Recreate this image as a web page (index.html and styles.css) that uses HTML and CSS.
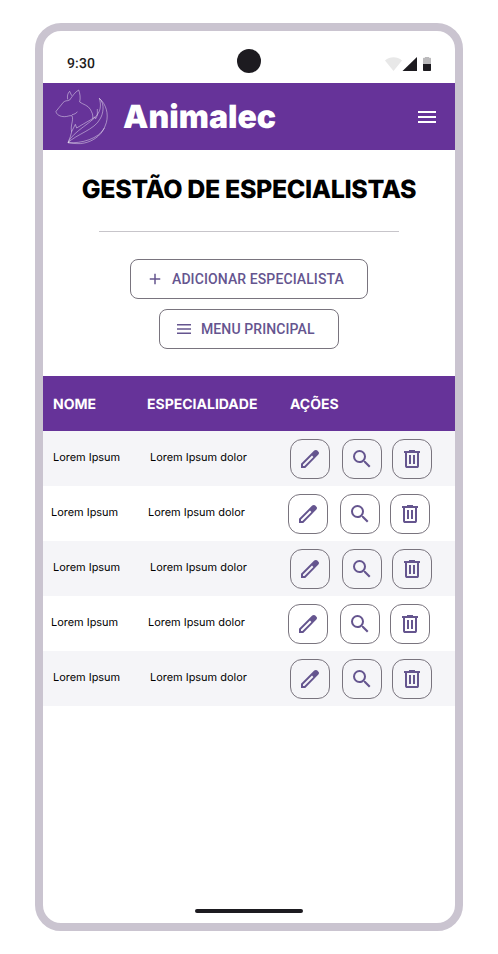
FILE: index.html
```html
<!DOCTYPE html>
<html lang="pt">
<head>
<meta charset="utf-8">
<title>Animalec</title>
<link rel="stylesheet" href="styles.css">
</head>
<body>
<svg class="defs" width="0" height="0">
  <symbol id="edit" viewBox="0 0 24 24"><path fill-rule="evenodd" d="M3 21v-4.250L16.200 3.550Q17.100 2.900 18 3q.7 0 1.300.6l1.100 1.100q.6.600.6 1.300 0 .8-.6 1.500L7.250 21zM5 19h1.400L15.400 10 14 8.600 5 17.600z"/></symbol>
  <symbol id="search" viewBox="0 0 24 24"><path d="M15.500 14h-.79l-.28-.27A6.470 6.470 0 0 0 16 9.500 6.500 6.500 0 1 0 9.500 16c1.610 0 3.090-.59 4.230-1.570l.27.28v.79l5 4.990L20.490 19l-4.990-5zm-6 0C7.010 14 5 11.990 5 9.500S7.010 5 9.500 5 14 7.010 14 9.500 11.990 14 9.500 14z"/></symbol>
  <symbol id="delete" viewBox="0 -960 960 960"><path d="M280-120q-33 0-56.500-23.500T200-200v-520h-40v-80h200v-40h240v40h200v80h-40v520q0 33-23.500 56.500T680-120H280Zm400-600H280v520h400v-520ZM360-280h80v-360h-80v360Zm160 0h80v-360h-80v360Z"/></symbol>
</svg>
<div class="phone">
  <div class="status">
    <span class="time">9:30</span>
    <span class="camera"></span>
    <svg class="signals" width="48" height="16" viewBox="0 0 48 16">
      <path d="M0 4.500C5 .3 12 .3 17 4.500L8.500 15z" fill="#e8e8e8"/>
      <path d="M32 1v14H17.500z" fill="#1d1b20"/>
      <path d="M38 8V2.500q0-.8.800-.8H40V1h4v.7h1.200q.8 0 .8.800V8z" fill="#bbbabc"/>
      <path d="M38 8h8v6.200q0 .8-.8.800h-6.400q-.8 0-.8-.8z" fill="#1d1b20"/>
    </svg>
  </div>
  <header class="appbar">
    <svg class="logo" width="64" height="64" viewBox="0 0 192 192">
      <path d="M53 46C51 37 53 27 59 22L65 35M59 48C67 37 75 24 86 18C90 28 92 42 89 54C98 61 115 64 121 76C126 86 130 92 128 104M59 48L53 50C46 50 40 53 36 60C31 68 23 74 18 82C19 92 30 98 44 98C53 98 58 94 66 95C72 111 60 122 65 144L61 158L54 176M66 92C73 91 79 88 82 83M65 143L76 121L80 132L100 120L128 104L134 99L137 104L142 94L142 75M148 43C154 62 151 78 145 87C134 112 68 142 54 176M148 43C166 60 159 91 150 105C134 137 79 151 54 176M148 43C169 61 176 90 169 116L163 132C147 164 94 179 54 176M54 176C68 178 88 181 103 177C127 172 151 157 163 132"/>
    </svg>
    <h1 class="brand">Animalec</h1>
    <svg class="burger" width="18" height="12" viewBox="0 0 18 12"><path d="M0 0h18v2H0zM0 5h18v2H0zM0 10h18v2H0z"/></svg>
  </header>
  <main>
    <h2 class="title">GESTÃO DE ESPECIALISTAS</h2>
    <hr class="rule">
    <div class="buttons">
      <button class="btn add"><svg width="18" height="18" viewBox="0 0 18 18"><path d="M14.250 9.750h-4.500v4.500h-1.500v-4.500h-4.500v-1.500h4.500v-4.500h1.500v4.500h4.500z"/></svg><span>ADICIONAR ESPECIALISTA</span></button>
      <button class="btn menu"><svg width="18" height="18" viewBox="0 0 18 18"><path d="M2 4h14v1.500H2zM2 8.250h14v1.500H2zM2 12.500h14V14H2z"/></svg><span>MENU PRINCIPAL</span></button>
    </div>
    <div class="table">
      <div class="row head"><span>NOME</span><span>ESPECIALIDADE</span><span>AÇÕES</span></div>
      <div class="row odd"><span>Lorem Ipsum</span><span>Lorem Ipsum dolor</span><div class="actions"><button><svg><use href="#edit"/></svg></button><button><svg><use href="#search"/></svg></button><button><svg><use href="#delete"/></svg></button></div></div>
      <div class="row even"><span>Lorem Ipsum</span><span>Lorem Ipsum dolor</span><div class="actions"><button><svg><use href="#edit"/></svg></button><button><svg><use href="#search"/></svg></button><button><svg><use href="#delete"/></svg></button></div></div>
      <div class="row odd"><span>Lorem Ipsum</span><span>Lorem Ipsum dolor</span><div class="actions"><button><svg><use href="#edit"/></svg></button><button><svg><use href="#search"/></svg></button><button><svg><use href="#delete"/></svg></button></div></div>
      <div class="row even"><span>Lorem Ipsum</span><span>Lorem Ipsum dolor</span><div class="actions"><button><svg><use href="#edit"/></svg></button><button><svg><use href="#search"/></svg></button><button><svg><use href="#delete"/></svg></button></div></div>
      <div class="row odd"><span>Lorem Ipsum</span><span>Lorem Ipsum dolor</span><div class="actions"><button><svg><use href="#edit"/></svg></button><button><svg><use href="#search"/></svg></button><button><svg><use href="#delete"/></svg></button></div></div>
    </div>
  </main>
  <div class="handle"></div>
</div>
</body>
</html>
```
FILE: styles.css
```css
* { box-sizing: border-box; }
body { margin: 0; padding: 23px 35px; background: #fff; font-family: Inter, sans-serif; font-optical-sizing: none; text-rendering: geometricPrecision; color: #000; }
.defs { display: block; height: 0; }
h1, h2 { margin: 0; }
button { font: inherit; background: none; padding: 0; margin: 0; }
svg { display: block; flex: none; }
.phone { width: 428px; height: 908px; border: 8px solid #cac4d0; border-radius: 26px; display: flex; flex-direction: column; align-items: stretch; overflow: hidden; }
.status { height: 52px; flex: none; display: grid; grid-template-columns: 170px 24px 1fr; padding: 18px 23px 0 24px; }
.time { font: 500 14px/20px Roboto, sans-serif; letter-spacing: .14px; color: #1d1b20; padding-top: 5px; }
.camera { width: 24px; height: 24px; border-radius: 50%; background: #1d1b20; }
.signals { justify-self: end; margin: 7px -1px 0 0; }
.appbar { height: 67px; flex: none; background: #663399; display: flex; align-items: center; padding: 0 19px 0 7px; }
.logo { fill: none; stroke: #fff; stroke-opacity: .65; stroke-width: 2; stroke-linejoin: round; margin-top: -1px; }
.brand { color: #fff; font-size: 32px; line-height: 40px; font-weight: 900; margin-left: 9px; }
.burger { fill: #fff; margin-left: auto; }
main { flex: 1; }
.title { font-size: 25px; line-height: 30px; font-weight: 800; text-align: center; padding-top: 25px; white-space: nowrap; letter-spacing: -.37px; }
.rule { width: 300px; height: 1px; border: 0; background: #c7c5ca; margin: 26px auto 27px 56px; }
.buttons { display: flex; flex-direction: column; align-items: center; gap: 10px; margin-bottom: 27px; }
.btn { height: 40px; display: flex; align-items: center; gap: 8px; padding-left: 15px; border: 1px solid #79747e; border-radius: 8px; color: #65558f; font: 500 14px/20px Roboto, sans-serif; letter-spacing: .1px; white-space: nowrap; }
.btn svg { fill: currentColor; }
.add { width: 238px; }
.menu { width: 180px; }
.row { height: 55px; display: grid; grid-template-columns: 97px 140px auto; align-items: center; padding-left: 10px; font-size: 10.95px; line-height: 16px; }
.row > span { padding-bottom: 3px; }
.odd { background: #f5f5f8; }
.even { padding-left: 8px; }
.head { grid-template-columns: 94px 143px auto; background: #663399; color: #fff; font-size: 14px; font-weight: 700; }
.head > span { padding: 2px 0 0; }
.actions { display: flex; }
.actions button { width: 40px; height: 40px; border: 1px solid #79747e; border-radius: 12px; display: grid; place-items: center; color: #65558f; }
.actions button:nth-child(2) { margin: 0 10px 0 12px; }
.actions svg { width: 24px; height: 24px; fill: currentColor; }
.handle { width: 108px; height: 4px; border-radius: 2px; background: #1d1b20; margin: 0 auto 10px; flex: none; }
```
